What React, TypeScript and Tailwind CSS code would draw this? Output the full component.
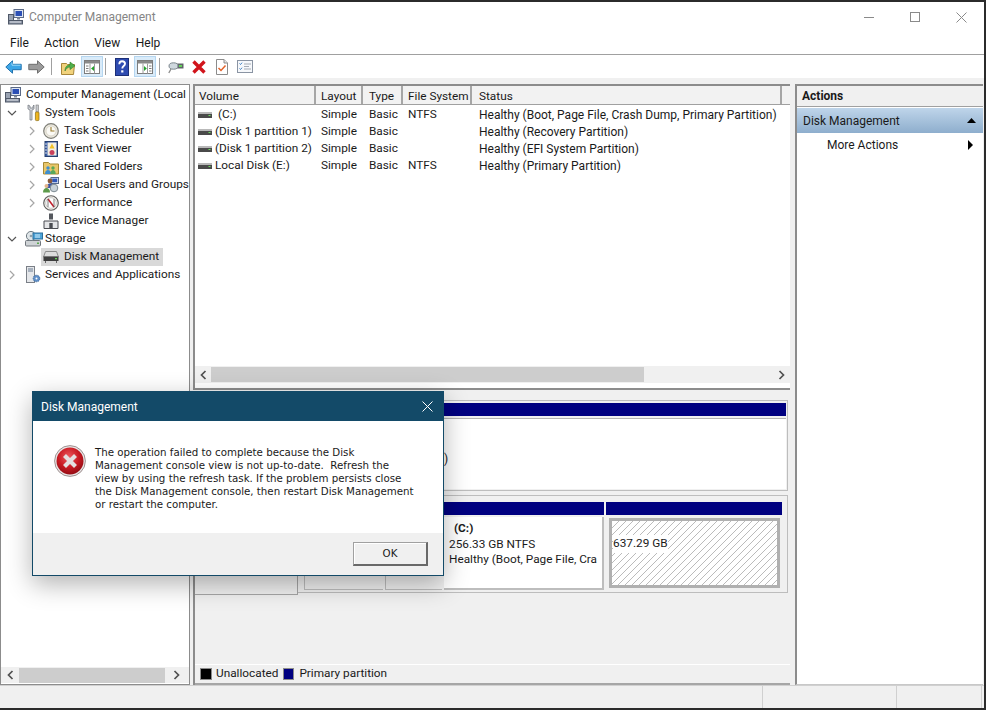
import React from 'react';

// Small drawn icons, all on a 16x16 grid unless noted
function ComputerIcon() {
    return (
        <svg width="16" height="16" viewBox="0 0 16 16">
            <rect x="6" y="0.5" width="9.5" height="8" fill="#dfe6f2" stroke="#5b6a86" />
            <rect x="7.5" y="2" width="6.5" height="5" fill="#2b4fb5" />
            <rect x="9" y="8.5" width="3" height="2" fill="#7a8496" />
            <rect x="0.5" y="5.5" width="5" height="6" fill="#9aa3b2" stroke="#4f5868" />
            <rect x="0.5" y="11.5" width="14" height="3.5" fill="#8b93a3" stroke="#4f5868" />
            <path d="M2 13h11" stroke="#dfe3ea" />
        </svg>
    );
}

function ToolsIcon() {
    return (
        <svg width="16" height="18" viewBox="0 0 16 18">
            <path d="M3 1v4l2 1v10h2V6l2-1V1L8 2v2H5V2z" fill="#d5d8dc" stroke="#6c7078" strokeWidth="0.7" />
            <rect x="11" y="1" width="2.4" height="7" fill="#c8cbd0" stroke="#777" strokeWidth="0.6" />
            <rect x="10.4" y="8" width="3.6" height="8.6" rx="1" fill="#eeb51f" stroke="#8a6a10" strokeWidth="0.7" />
        </svg>
    );
}

function ClockIcon() {
    return (
        <svg width="16" height="16" viewBox="0 0 16 16">
            <circle cx="8" cy="8" r="7.3" fill="#ece9df" stroke="#7f7f78" strokeWidth="1.2" />
            <circle cx="8" cy="8" r="5" fill="#fbfaf5" stroke="#c7c3b3" strokeWidth="0.6" />
            <path d="M8 4v4h3.5" fill="none" stroke="#9a7a2a" strokeWidth="1.1" />
        </svg>
    );
}

function EventIcon() {
    return (
        <svg width="16" height="16" viewBox="0 0 16 16">
            <rect x="2" y="0.5" width="12.5" height="15" fill="#3a5ea8" stroke="#27406f" />
            <rect x="4.5" y="1.5" width="9" height="13" fill="#f3efe2" />
            <path d="M9 2.5l2.6 5h-5.2z" fill="#f0c22c" />
            <circle cx="9" cy="11.5" r="2.5" fill="#c9405c" />
            <path d="M2 3h2M2 6h2M2 9h2M2 12h2" stroke="#d8dde8" />
        </svg>
    );
}

function SharedFolderIcon() {
    return (
        <svg width="16" height="16" viewBox="0 0 16 16">
            <path d="M0.5 3.5h5l1.5 1.5h8.500v10h-15z" fill="#e8c66a" stroke="#a78a35" />
            <circle cx="5" cy="9" r="1.7" fill="#3f8fcf" />
            <path d="M2 15c0-3 1.4-4 3-4s3 1 3 4z" fill="#3f8fcf" />
            <circle cx="10" cy="9" r="1.7" fill="#59a858" />
            <path d="M7.5 15c0-3 1-4 2.5-4s2.7 1 2.7 4z" fill="#59a858" />
        </svg>
    );
}

function UsersIcon() {
    return (
        <svg width="16" height="16" viewBox="0 0 16 16">
            <rect x="8" y="0.5" width="7.5" height="6" fill="#d9e2f2" stroke="#56688c" />
            <rect x="9.2" y="1.6" width="5" height="3.6" fill="#2e55b8" />
            <circle cx="7" cy="4" r="2.4" fill="#8a5a3a" />
            <path d="M3 11c0-3 2-4.5 4-4.5s4 1.5 4 4.5z" fill="#3b55a6" />
            <circle cx="3.5" cy="9" r="2" fill="#e3b48a" />
            <path d="M0 15.5c0-3 1.6-4.5 3.5-4.5S7 12.5 7 15.5z" fill="#5d9a4b" />
            <circle cx="11" cy="11" r="3.8" fill="#c9d2d8" stroke="#7d8a92" />
        </svg>
    );
}

function PerfIcon() {
    return (
        <svg width="16" height="16" viewBox="0 0 16 16">
            <circle cx="8" cy="8" r="7.3" fill="#f4f2ec" stroke="#5d5d5d" strokeWidth="1.1" />
            <circle cx="8" cy="8" r="5.3" fill="#fff" stroke="#a9a9a9" strokeWidth="0.6" />
            <path d="M5 4l6 8" stroke="#c21f2c" strokeWidth="1.6" />
            <path d="M5 12V4M11 12V4" stroke="#5d5d5d" strokeWidth="0.8" />
        </svg>
    );
}

function DeviceIcon() {
    return (
        <svg width="16" height="16" viewBox="0 0 16 16">
            <rect x="6" y="0.5" width="4" height="6" fill="#55585e" />
            <path d="M1 15.5v-7.5h14v7.5z" fill="#e4e5e7" stroke="#4b4d52" />
            <rect x="6.3" y="10" width="3.4" height="5" fill="#4b4d52" />
        </svg>
    );
}

function StorageIcon() {
    return (
        <svg width="18" height="16" viewBox="0 0 18 16">
            <rect x="0.5" y="9.5" width="15" height="5.5" rx="1" fill="#cfd3d6" stroke="#70767c" />
            <circle cx="6" cy="5" r="4.6" fill="#dfe5e8" stroke="#6e7a82" />
            <circle cx="6" cy="5" r="1.3" fill="#8fa0aa" />
            <rect x="8" y="2" width="9.5" height="6" fill="#4ba3d8" stroke="#2c6f9c" />
            <path d="M10 4h5M10 6h5" stroke="#d6eefb" />
            <rect x="12" y="11.5" width="2" height="1.5" fill="#5aa84e" />
        </svg>
    );
}

function DiskIcon() {
    return (
        <svg width="16" height="12" viewBox="0 0 16 12">
            <path d="M2.500 0.500h11l2 5.500h-15z" fill="#dcdcdc" stroke="#8a8a8a" />
            <rect x="0.5" y="5.5" width="15" height="4.5" fill="#3e3e3e" />
            <rect x="12" y="7" width="2" height="1.3" fill="#66d45a" />
            <path d="M2.500 10v2M13.500 10v2" stroke="#666" />
        </svg>
    );
}

function ServicesIcon() {
    return (
        <svg width="16" height="18" viewBox="0 0 16 18">
            <rect x="1.5" y="0.5" width="8" height="16" fill="#e5e7ea" stroke="#7a7f87" />
            <path d="M3 3h5M3 5h5" stroke="#6a7c93" />
            <circle cx="11.5" cy="12.5" r="3.3" fill="#5f8fc9" stroke="#34608f" strokeWidth="0.8" strokeDasharray="1.5 0.8" />
            <circle cx="11.5" cy="12.5" r="1" fill="#fff" />
        </svg>
    );
}

function VolumeIcon() {
    return (
        <svg width="14" height="7" viewBox="0 0 14 7" className="shrink-0">
            <rect x="0" y="0" width="14" height="2" fill="#b9b9b9" />
            <rect x="0" y="2" width="14" height="4" fill="#4a4a4a" />
            <rect x="10.5" y="3" width="2" height="1" fill="#6ee060" />
        </svg>
    );
}

function Chevron({ open }: { open?: boolean }) {
    return (
        <svg width="10" height="10" viewBox="0 0 10 10" fill="none">
            {open
                ? <path d="M1 3l4 4 4-4" stroke="#555" strokeWidth="1.2" />
                : <path d="M3 1l4 4-4 4" stroke="#a6a6a6" strokeWidth="1.2" />}
        </svg>
    );
}

function ScrollArrow({ right }: { right?: boolean }) {
    return (
        <svg width="8" height="10" viewBox="0 0 8 10" fill="none">
            <path d={right ? 'M1.5 1l4 4-4 4' : 'M6.5 1l-4 4 4 4'} stroke="#505050" strokeWidth="1.7" />
        </svg>
    );
}

function BackIcon() {
    return (
        <svg width="17" height="14" viewBox="0 0 17 14">
            <path d="M7.500 0.800L0.800 7l6.700 6.200V9.700h8.700V4.300H7.500z" fill="#3ea6e6" stroke="#2272ad" />
            <path d="M7 2.500v2.700h8.500" fill="none" stroke="#9fdcfa" />
        </svg>
    );
}

function ForwardIcon() {
    return (
        <svg width="17" height="14" viewBox="0 0 17 14">
            <path d="M9.500 0.800L16.200 7l-6.700 6.200V9.700H0.800V4.300h8.700z" fill="#9c9c9c" stroke="#6e6e6e" />
        </svg>
    );
}

function FolderUpIcon() {
    return (
        <svg width="16" height="16" viewBox="0 0 16 16">
            <path d="M0.500 4.500h5l1 1h7l-1 10h-12z" fill="#f1d27c" stroke="#a8873a" />
            <path d="M4 12c0-4 2-6 5-6V3l5 3.800-5 3.800V8c-2 0-4 1.500-5 4z" fill="#4fb04a" stroke="#2f7d2c" strokeWidth="0.6" />
        </svg>
    );
}

function PaneIcon({ right }: { right?: boolean }) {
    return (
        <svg width="16" height="14" viewBox="0 0 16 14">
            <rect x="0.500" y="0.500" width="15" height="13" fill="#fff" stroke="#7c7c7c" />
            <rect x="1" y="1" width="14" height="2.500" fill="#8a8a8a" />
            <path d="M6 3.500v10M10.500 3.500v10" stroke="#9a9a9a" />
            <path d={right ? 'M7 6v5l2.800-2.500z' : 'M10 6v5L7 8.500z'} fill="#22a32b" />
            <path d={right ? 'M12 6h2.500M12 8.500h2.500M12 11h2.500' : 'M2 6h2.500M2 8.500h2.500M2 11h2.500'} stroke="#7c7c7c" />
        </svg>
    );
}

function HelpIcon() {
    return (
        <svg width="14" height="18" viewBox="0 0 14 18">
            <rect x="0.500" y="0.500" width="13" height="17" fill="#2e4bb0" stroke="#1c2f78" />
            <path d="M4.300 6.200C4.300 4 5.600 3.200 7.100 3.200c1.700 0 2.900 1 2.900 2.600 0 2.200-2.700 2.300-2.700 4.600" fill="none" stroke="#fff" strokeWidth="1.900" />
            <rect x="6.200" y="12.300" width="2.200" height="2.200" fill="#fff" />
        </svg>
    );
}

function ConnectIcon() {
    return (
        <svg width="16" height="14" viewBox="0 0 16 14">
            <path d="M5 3.500h10.500v5H5z" fill="#5f6468" />
            <rect x="11" y="5" width="3" height="2" fill="#66d45a" />
            <ellipse cx="5.500" cy="6" rx="4.500" ry="3.200" fill="#cfd8de" stroke="#7c868d" />
            <path d="M3 9L0.800 13" stroke="#8a8a8a" strokeWidth="1.300" />
        </svg>
    );
}

function DeleteIcon() {
    return (
        <svg width="14" height="14" viewBox="0 0 14 14">
            <path d="M1.500 1.500l11 11M12.500 1.500l-11 11" stroke="#d1141c" strokeWidth="3.400" />
        </svg>
    );
}

function PropsIcon() {
    return (
        <svg width="12" height="16" viewBox="0 0 12 16">
            <path d="M0.500 0.500h7.500l3.500 3.500v11.500h-11z" fill="#fff" stroke="#8c8c8c" />
            <path d="M8 0.500v3.500h3.500" fill="#e6e6e6" stroke="#8c8c8c" />
            <path d="M2.500 9l2.500 2.500 4.500-5" fill="none" stroke="#e2632a" strokeWidth="1.500" />
        </svg>
    );
}

function ListIcon() {
    return (
        <svg width="16" height="13" viewBox="0 0 16 13">
            <rect x="0.500" y="0.500" width="15" height="12" fill="#f6f8fb" stroke="#8a94a3" />
            <path d="M2.500 3.500l1 1 1.500-1.800M2.500 8.500l1 1 1.500-1.800" fill="none" stroke="#3a7fc4" />
            <path d="M7 4h7M7 6.500h5M7 9h7" stroke="#a4abb5" />
        </svg>
    );
}

function ErrorIcon() {
    return (
        <svg width="32" height="32" viewBox="0 0 32 32">
            <defs>
                <radialGradient id="err" cx="45%" cy="35%" r="70%">
                    <stop offset="0%" stopColor="#ee5a5f" />
                    <stop offset="55%" stopColor="#c81a22" />
                    <stop offset="100%" stopColor="#8c0a12" />
                </radialGradient>
            </defs>
            <circle cx="16" cy="16" r="15.400" fill="#e9e6e6" stroke="#8a7a7a" strokeWidth="0.800" />
            <circle cx="16" cy="16" r="13.500" fill="url(#err)" />
            <path d="M10.500 10.500l11 11M21.500 10.500l-11 11" stroke="#e4e0e0" strokeWidth="4.200" />
        </svg>
    );
}

const treeRows = [
    { level: 1, label: 'System Tools', icon: <ToolsIcon />, chevron: 'open' },
    { level: 2, label: 'Task Scheduler', icon: <ClockIcon />, chevron: 'closed' },
    { level: 2, label: 'Event Viewer', icon: <EventIcon />, chevron: 'closed' },
    { level: 2, label: 'Shared Folders', icon: <SharedFolderIcon />, chevron: 'closed' },
    { level: 2, label: 'Local Users and Groups', icon: <UsersIcon />, chevron: 'closed' },
    { level: 2, label: 'Performance', icon: <PerfIcon />, chevron: 'closed' },
    { level: 2, label: 'Device Manager', icon: <DeviceIcon />, chevron: '' },
    { level: 1, label: 'Storage', icon: <StorageIcon />, chevron: 'open' },
    { level: 2, label: 'Disk Management', icon: <DiskIcon />, chevron: '', selected: true },
    { level: 1, label: 'Services and Applications', icon: <ServicesIcon />, chevron: 'closed' },
];

const volumes = [
    { name: '(C:)', fs: 'NTFS', status: 'Healthy (Boot, Page File, Crash Dump, Primary Partition)', inset: true },
    { name: '(Disk 1 partition 1)', fs: '', status: 'Healthy (Recovery Partition)' },
    { name: '(Disk 1 partition 2)', fs: '', status: 'Healthy (EFI System Partition)' },
    { name: 'Local Disk (E:)', fs: 'NTFS', status: 'Healthy (Primary Partition)' },
];

function Titlebar() {
    return (
        <div className="h-[30px] flex items-center bg-white shrink-0">
            <div className="ml-[8px] w-[21px]"><ComputerIcon /></div>
            <span className="text-[#858585]">Computer Management</span>
            <div className="ml-auto flex items-center">
                <div className="w-[46px] flex justify-center"><div className="w-[10px] h-px bg-[#8a8a8a]" /></div>
                <div className="w-[46px] flex justify-center"><div className="w-[10px] h-[10px] border border-[#8a8a8a]" /></div>
                <div className="w-[46px] flex justify-center">
                    <svg width="11" height="11" viewBox="0 0 11 11"><path d="M0.500 0.500l10 10M10.500 0.500l-10 10" stroke="#8a8a8a" /></svg>
                </div>
            </div>
        </div>
    );
}

function Menubar() {
    return (
        <div className="h-[23px] flex items-center pl-[10px] gap-[15.500px] bg-white border-b border-[#a0a0a0] shrink-0">
            <span>File</span>
            <span>Action</span>
            <span>View</span>
            <span>Help</span>
        </div>
    );
}

function Toolbar() {
    const sep = 'w-px h-[17px] bg-[#a0a0a0]';
    const active = 'w-[22px] h-[21px] flex items-center justify-center bg-[#d9ebf9] border border-[#b5d6f0]';
    return (
        <div className="h-[23px] flex items-center bg-white shrink-0">
            <div className="ml-[5px]"><BackIcon /></div>
            <div className="ml-[6px]"><ForwardIcon /></div>
            <div className={`${sep} ml-[6px]`} />
            <div className="ml-[9px]"><FolderUpIcon /></div>
            <div className={`${active} ml-[4px]`}><PaneIcon /></div>
            <div className={`${sep} ml-[2px]`} />
            <div className="ml-[9px]"><HelpIcon /></div>
            <div className={`${active} ml-[5px]`}><PaneIcon right /></div>
            <div className={`${sep} ml-[3px]`} />
            <div className="ml-[8px]"><ConnectIcon /></div>
            <div className="ml-[8px]"><DeleteIcon /></div>
            <div className="ml-[10px]"><PropsIcon /></div>
            <div className="ml-[9px]"><ListIcon /></div>
        </div>
    );
}

function TreePane() {
    return (
        <div className="w-[190px] shrink-0 flex flex-col bg-white border border-[#8c8c8c] overflow-hidden text-[11.800px]">
            <div className="flex-1 pt-[1px]">
                <div className="h-[18px] flex items-center whitespace-nowrap">
                    <div className="ml-[4px] w-[21px] shrink-0"><ComputerIcon /></div>
                    <span>Computer Management (Local</span>
                </div>
                {treeRows.map((row) => (
                    <div key={row.label} className="h-[18px] flex items-center whitespace-nowrap">
                        <div className={`${row.level === 1 ? 'ml-[6px]' : 'ml-[26px]'} w-[10px] shrink-0`}>
                            {row.chevron === 'open' && <Chevron open />}
                            {row.chevron === 'closed' && <Chevron />}
                        </div>
                        <div className={`ml-[4px] flex items-center h-[18px] ${row.selected ? 'bg-[#d9d9d9] w-[122px]' : ''}`}>
                            <div className={`${row.level === 1 ? 'pl-[4px] w-[24px]' : 'pl-[2px] w-[23px]'} flex shrink-0`}>{row.icon}</div>
                            <span>{row.label}</span>
                        </div>
                    </div>
                ))}
            </div>
            <div className="h-[16px] mb-[1px] flex items-center bg-[#f0f0f0]">
                <div className="w-[18px] flex justify-center"><ScrollArrow /></div>
                <div className="w-[146px] h-[15px] bg-[#cdcdcd]" />
                <div className="flex-1 flex justify-center"><ScrollArrow right /></div>
            </div>
        </div>
    );
}

function VolumeList() {
    const head = 'h-[18px] pt-[4px] flex items-center whitespace-nowrap border-r-2 border-[#a6a6a6] bg-[#f2f2f2] text-[11.800px]';
    return (
        <div className="h-[306px] flex flex-col bg-white border-t-2 border-l-2 border-b-2 border-[#8c8c8c] shrink-0">
            <div className="grid grid-cols-[121px_47px_40px_69px_310px_1fr] border-b border-[#a0a0a0] shrink-0">
                <div className={`${head} pl-[4px]`}>Volume</div>
                <div className={`${head} pl-[5px]`}>Layout</div>
                <div className={`${head} pl-[6px]`}>Type</div>
                <div className={`${head} pl-[5px]`}>File System</div>
                <div className={`${head} pl-[7px]`}>Status</div>
                <div className="bg-[#f2f2f2]" />
            </div>
            <div className="flex-1 pt-[1px]">
                {volumes.map((v) => (
                    <div key={v.name} className="h-[17px] grid grid-cols-[121px_47px_40px_69px_1fr] items-center whitespace-nowrap">
                        <div className="flex items-center pl-[3px] gap-[3px] text-[11.800px]">
                            <VolumeIcon />
                            <span className={v.inset ? 'ml-[3px]' : ''}>{v.name}</span>
                        </div>
                        <div className="pl-[5px] text-[11.800px]">Simple</div>
                        <div className="pl-[6px] text-[11.800px]">Basic</div>
                        <div className="pl-[5px] text-[11.800px]">{v.fs}</div>
                        <div className="pl-[7px]">{v.status}</div>
                    </div>
                ))}
            </div>
            <div className="h-[17px] mb-[5px] flex items-center bg-[#f0f0f0] shrink-0">
                <div className="w-[16px] flex justify-center"><ScrollArrow /></div>
                <div className="w-[433px] h-[15px] bg-[#cdcdcd]" />
                <div className="flex-1 flex justify-end pr-[4px]"><ScrollArrow right /></div>
            </div>
        </div>
    );
}

function DiskPane() {
    return (
        <div className="flex-1 flex flex-col bg-[#f0f0f0] border-l-2 border-[#8c8c8c] mt-[2px]">
            <div className="mt-[8px] h-[91px] mr-[2px] border border-[#bdbdbd] px-[1px] pt-[2px] pb-[1px] flex flex-col shrink-0">
                <div className="h-[13px] bg-[#000080] shrink-0" />
                <div className="mt-[2px] flex-1 bg-white border-t border-[#b4b4b4] pl-[247px] pt-[33px] leading-[15px] whitespace-nowrap">)</div>
            </div>
            <div className="mt-[4px] h-[99px] mr-[2px] flex border-t border-[#bdbdbd] shrink-0">
                <div className="w-[103px] h-[99px] border-b border-r border-[#a6a6a6] shrink-0" />
                <div className="flex-1 flex h-[97px] border-b border-r border-[#bdbdbd] pt-[6px] pl-[6px] pr-[3px] gap-[2px]">
                    <div className="w-[79px] flex flex-col h-[88px]">
                        <div className="h-[13px] bg-[#000080]" />
                        <div className="mt-[2px] flex-1 border-l border-b border-[#bdbdbd]" />
                    </div>
                    <div className="w-[57px] flex flex-col h-[88px]">
                        <div className="h-[13px] bg-[#000080]" />
                        <div className="mt-[2px] flex-1 border-l border-b border-[#bdbdbd]" />
                    </div>
                    <div className="w-[160px] flex flex-col h-[88px]">
                        <div className="h-[13px] bg-[#000080]" />
                        <div className="mt-[2px] flex-1 bg-white border-b-2 border-r-2 border-[#bdbdbd] pl-[5px] leading-[15.500px] pt-[4px] whitespace-nowrap text-[11.800px]">
                            <div className="font-bold pl-[5px]">(C:)</div>
                            <div>256.33 GB NTFS</div>
                            <div>Healthy (Boot, Page File, Cra</div>
                        </div>
                    </div>
                    <div className="w-[176px] flex flex-col h-[86px]">
                        <div className="h-[13px] bg-[#000080]" />
                        <div className="mt-[3px] h-[70px] ml-[3px] mr-[2px] border-[3px] border-[#b0b0b0] flex items-start pt-[14px] pl-[1px] bg-[repeating-linear-gradient(135deg,#ffffff_0,#ffffff_4.250px,#bbbbbb_4.250px,#bbbbbb_4.950px)]">
                            <span className="bg-white text-[11.800px]">637.29 GB</span>
                        </div>
                    </div>
                </div>
            </div>
            <div className="mt-auto h-[21px] flex items-center border-t border-white border-b-2 border-b-[#a6a6a6] pl-[5px] shrink-0 text-[11.800px]">
                <div className="w-[12px] h-[12px] bg-black border border-[#8a8a8a]" />
                <span className="ml-[4px]">Unallocated</span>
                <div className="ml-[5px] w-[11px] h-[12px] bg-[#000080] border border-[#8a8a8a]" />
                <span className="ml-[5px]">Primary partition</span>
            </div>
        </div>
    );
}

function ActionsPane() {
    return (
        <div className="w-[188px] ml-[5px] flex flex-col bg-white border-t-2 border-l-2 border-[#8c8c8c] border-b border-b-[#c8c8c8] shrink-0">
            <div className="h-[21px] flex items-center pl-[5px] font-bold bg-[#f0f0f0] border-b border-[#a0a0a0]">Actions</div>
            <div className="mt-[1px] h-[25px] flex items-center pl-[6px] pr-[7px] justify-between bg-gradient-to-b from-[#bfd5ea] to-[#8eaecd]">
                <span>Disk Management</span>
                <svg width="9" height="5" viewBox="0 0 9 5"><path d="M4.500 0L9 5H0z" fill="#000" /></svg>
            </div>
            <div className="h-[24px] flex items-center pl-[30px] pr-[10px] justify-between">
                <span>More Actions</span>
                <svg width="5" height="10" viewBox="0 0 5 10"><path d="M0 0l5 5-5 5z" fill="#000" /></svg>
            </div>
        </div>
    );
}

function Dialog() {
    return (
        <div className="absolute left-[32px] top-[389px] w-[412px] h-[185px] flex flex-col bg-white border border-[#134a68] shadow-[0_8px_24px_rgba(0,0,0,0.3)]">
            <div className="h-[29px] flex items-center pl-[8px] pr-[10px] justify-between bg-[#134a68] text-white shrink-0">
                <span>Disk Management</span>
                <svg width="11" height="11" viewBox="0 0 11 11"><path d="M0.500 0.500l10 10M10.500 0.500l-10 10" stroke="#fff" /></svg>
            </div>
            <div className="flex-1 flex pl-[21px] pt-[24px]">
                <div className="w-[41px] shrink-0"><ErrorIcon /></div>
                <p className="w-[330px] pt-[1px] font-['DejaVu_Sans',sans-serif] text-[10.250px] leading-[13px] whitespace-nowrap">
                    The operation failed to complete because the Disk<br />
                    Management console view is not up-to-date.{'\u00a0 '}Refresh the<br />
                    view by using the refresh task. If the problem persists close<br />
                    the Disk Management console, then restart Disk Management<br />
                    or restart the computer.
                </p>
            </div>
            <div className="h-[42px] flex items-start justify-end pr-[15px] pt-[9px] bg-[#f0f0f0] shrink-0">
                <div className="w-[75px] h-[24px] flex items-center justify-center bg-[#f0f0f0] border border-[#a0a0a0] border-r-2 border-b-2 border-r-[#696969] border-b-[#696969] shadow-[inset_1px_1px_0_#ffffff] font-['DejaVu_Sans',sans-serif] text-[10.250px]">OK</div>
            </div>
        </div>
    );
}

export default function App() {
    return (
        <div className="relative w-[986px] h-[710px] flex flex-col overflow-hidden bg-[#f0f0f0] border-t-2 border-r-2 border-b-2 border-[#2b2b2b] text-[12px] text-[#1a1a1a] font-['Roboto','Open_Sans',sans-serif]">
            <Titlebar />
            <Menubar />
            <Toolbar />
            <div className="h-[607px] flex pt-[6px]">
                <TreePane />
                <div className="w-[3px] shrink-0" />
                <div className="w-[597px] flex flex-col shrink-0">
                    <VolumeList />
                    <DiskPane />
                </div>
                <ActionsPane />
            </div>
            <div className="flex-1 flex border-t border-[#d0d0d0]">
                <div className="w-[763px] border-r border-[#d0d0d0]" />
                <div className="w-[134px] border-r border-[#d0d0d0]" />
                <div className="w-[85px] border-r border-[#d0d0d0]" />
            </div>
            <Dialog />
        </div>
    );
}
